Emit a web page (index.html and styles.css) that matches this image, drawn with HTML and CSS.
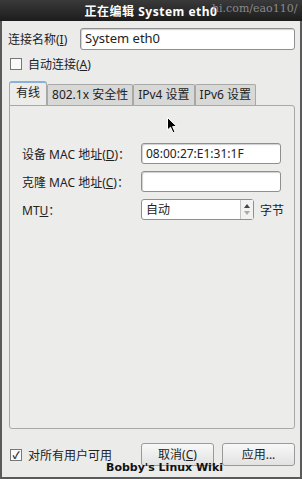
FILE: index.html
```html
<!DOCTYPE html>
<html lang="zh-CN">
<head>
    <meta charset="UTF-8">
    <title>正在编辑 System eth0</title>
    <link rel="stylesheet" href="styles.css">
</head>
<body>

<div class="window">
    <div class="titlebar">
        <span class="title">正在编辑 System eth0</span>
        <span class="mark">hi.com/eao110/</span>
    </div>

    <div class="content">
        <div class="row name-row">
            <label>连接名称(<u>I</u>)</label>
            <div class="entry wide">System eth0</div>
        </div>

        <div class="check-row">
            <span class="box"></span>
            <span>自动连接(<u>A</u>)</span>
        </div>

        <div class="tabs">
            <div class="tab active">有线</div>
            <div class="tab">802.1x 安全性</div>
            <div class="tab">IPv4 设置</div>
            <div class="tab">IPv6 设置</div>
        </div>

        <div class="panel">
            <div class="field">
                <label>设备 MAC 地址(<u>D</u>)：</label>
                <div class="entry">08:00:27:E1:31:1F</div>
            </div>
            <div class="field">
                <label>克隆 MAC 地址(<u>C</u>)：</label>
                <div class="entry"></div>
            </div>
            <div class="field">
                <label>MT<u>U</u>：</label>
                <div class="spin">
                    <div class="spin-text">自动</div>
                    <div class="arrows">
                        <span class="up"></span>
                        <span class="down"></span>
                    </div>
                </div>
                <span class="unit">字节</span>
            </div>

            <!-- mouse pointer -->
            <svg class="pointer" width="11" height="17" viewBox="0 0 11 17">
                <path d="M0.5 0.5 L0.5 13 L3.5 10.2 L6 15.8 L8 15 L5.6 9.6 L9.8 9.6 Z" fill="#000" stroke="#fff" stroke-width="1"/>
            </svg>
        </div>

        <div class="footer">
            <div class="check-row">
                <span class="box checked">✓</span>
                <span>对所有用户可用</span>
            </div>
            <div class="buttons">
                <div class="btn">取消(<u>C</u>)</div>
                <div class="btn">应用...</div>
            </div>
            <span class="wiki">Bobby's Linux Wiki</span>
        </div>
    </div>
</div>

</body>
</html>
```

FILE: styles.css
```css
body {
    margin: 0;
    background: #fff;
    font-family: "Noto Sans", "Noto Sans CJK SC", sans-serif;
    font-size: 12px;
    color: #222;
}
u {
    text-decoration: underline;
}
.window {
    width: 302px;
    height: 479px;
    box-sizing: border-box;
    border: 2px solid #5a5a5a;
    border-top: none;
    background: #ebebea;
    display: flex;
    flex-direction: column;
}
.titlebar {
    height: 21px;
    margin: 0 -2px;
    background: linear-gradient(#3a3a3a, #1c1c1c);
    position: relative;
    display: flex;
    align-items: center;
    justify-content: center;
}
.title {
    color: #fff;
    font-weight: bold;
    font-size: 12px;
    letter-spacing: 0.5px;
}
.mark {
    position: absolute;
    left: 212px;
    top: 2px;
    color: #8a8a8a;
    font-size: 11px;
    font-family: "DejaVu Serif", serif;
}
.content {
    flex: 1;
    padding: 7px 5px 0 5px;
    display: flex;
    flex-direction: column;
}
.row {
    display: flex;
    align-items: center;
}
.name-row label {
    width: 72px;
    padding-left: 1px;
}
.entry {
    height: 21px;
    box-sizing: border-box;
    border: 1px solid #8f8f8f;
    border-radius: 3px;
    background: #fff;
    box-shadow: inset 1px 1px 1px #d0d0d0;
    padding: 0 4px;
    line-height: 19px;
    font-size: 12px;
    width: 140px;
    flex-shrink: 0;
}
.entry.wide {
    flex: 1;
    height: 22px;
    font-size: 13px;
}
.check-row {
    display: flex;
    align-items: center;
    gap: 6px;
    margin-top: 5px;
    height: 17px;
    padding-left: 3px;
}
.box {
    width: 10px;
    height: 10px;
    border: 1px solid #777;
    background: #fafafa;
    font-size: 10px;
    line-height: 10px;
    text-align: center;
    font-weight: bold;
}
.tabs {
    display: flex;
    margin-top: 9px;
    padding-left: 2px;
    align-items: flex-end;
    height: 24px;
}
.tab {
    height: 20px;
    line-height: 20px;
    padding: 0 4px;
    background: #d8d8d6;
    border: 1px solid #a8a8a6;
    border-bottom: none;
    border-radius: 2px 2px 0 0;
    font-size: 12px;
}
.tab.active {
    height: 23px;
    background: #ececeb;
    border-top: 2px solid #8ab0d8;
    border-radius: 3px 3px 0 0;
    position: relative;
    top: 1px;
    padding: 0 6px;
}
.panel {
    margin-left: 2px;
    height: 324px;
    border: 1px solid #a8a8a6;
    border-radius: 0 3px 3px 3px;
    background: #ececeb;
    box-sizing: border-box;
    padding: 37px 10px 0 12px;
    display: flex;
    flex-direction: column;
    gap: 7px;
    position: relative;
}
.field {
    display: flex;
    align-items: center;
    height: 21px;
    white-space: nowrap;
}
.field label {
    width: 119px;
    flex-shrink: 0;
}
.spin {
    width: 113px;
    height: 21px;
    flex-shrink: 0;
    box-sizing: border-box;
    border: 1px solid #8f8f8f;
    border-radius: 3px;
    background: #fff;
    display: flex;
}
.spin-text {
    flex: 1;
    padding-left: 4px;
    line-height: 19px;
}
.arrows {
    width: 12px;
    border-left: 1px solid #c4c4c4;
    background: #f2f2f2;
    display: flex;
    flex-direction: column;
    align-items: center;
    justify-content: space-around;
    padding: 2px 0;
}
.arrows .up {
    border: 3px solid transparent;
    border-top: none;
    border-bottom: 4px solid #444;
}
.arrows .down {
    border: 3px solid transparent;
    border-bottom: none;
    border-top: 4px solid #aaa;
}
.unit {
    margin-left: 6px;
}
.pointer {
    position: absolute;
    left: 157px;
    top: 11px;
}
.footer {
    position: relative;
    display: flex;
    justify-content: space-between;
    align-items: center;
    margin-top: 14px;
}
.footer .check-row {
    margin-top: 0;
}
.buttons {
    display: flex;
    gap: 8px;
}
.btn {
    width: 73px;
    height: 23px;
    box-sizing: border-box;
    border: 1px solid #9a9a9a;
    border-radius: 3px;
    background: linear-gradient(#f8f8f8, #e2e2e2);
    text-align: center;
    line-height: 21px;
}
.wiki {
    position: absolute;
    left: 99px;
    top: 18px;
    font-family: "DejaVu Sans", sans-serif;
    font-weight: bold;
    font-size: 11px;
    color: #111;
}
```
